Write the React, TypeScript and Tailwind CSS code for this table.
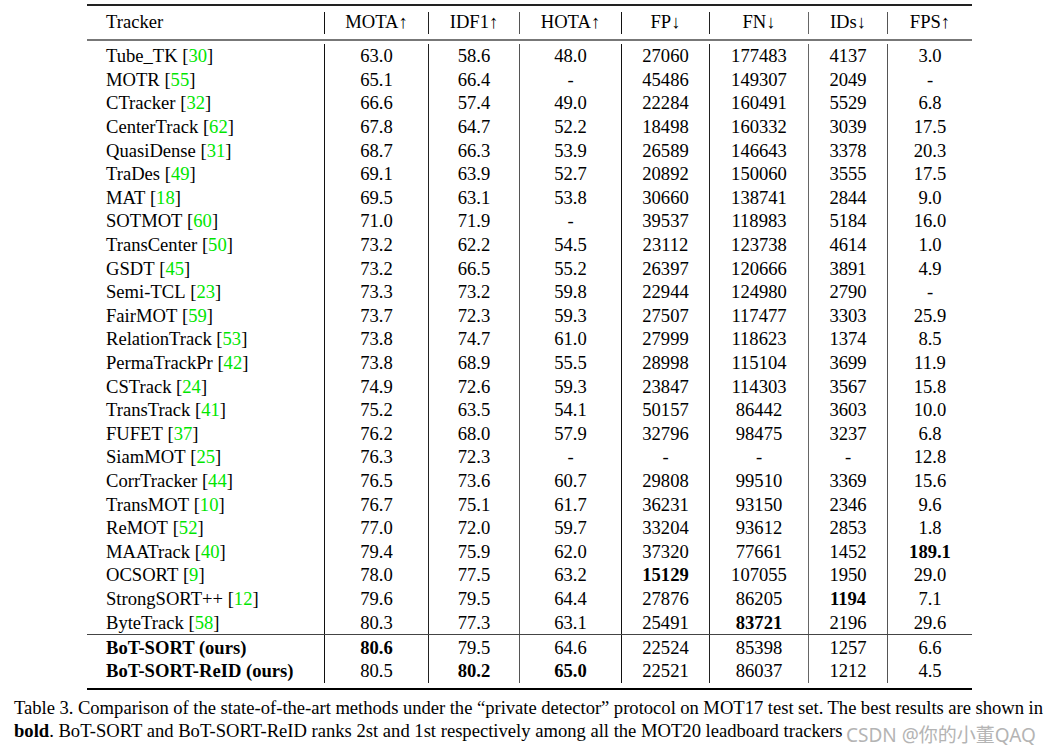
import React from "react";

type Cell = string | { b: string };
type Row = { name: string; cite?: string; bold?: boolean; cells: Cell[] };

const rows: Row[] = [
  { name: "Tube_TK", cite: "30", cells: ["63.0", "58.6", "48.0", "27060", "177483", "4137", "3.0"] },
  { name: "MOTR", cite: "55", cells: ["65.1", "66.4", "-", "45486", "149307", "2049", "-"] },
  { name: "CTracker", cite: "32", cells: ["66.6", "57.4", "49.0", "22284", "160491", "5529", "6.8"] },
  { name: "CenterTrack", cite: "62", cells: ["67.8", "64.7", "52.2", "18498", "160332", "3039", "17.5"] },
  { name: "QuasiDense", cite: "31", cells: ["68.7", "66.3", "53.9", "26589", "146643", "3378", "20.3"] },
  { name: "TraDes", cite: "49", cells: ["69.1", "63.9", "52.7", "20892", "150060", "3555", "17.5"] },
  { name: "MAT", cite: "18", cells: ["69.5", "63.1", "53.8", "30660", "138741", "2844", "9.0"] },
  { name: "SOTMOT", cite: "60", cells: ["71.0", "71.9", "-", "39537", "118983", "5184", "16.0"] },
  { name: "TransCenter", cite: "50", cells: ["73.2", "62.2", "54.5", "23112", "123738", "4614", "1.0"] },
  { name: "GSDT", cite: "45", cells: ["73.2", "66.5", "55.2", "26397", "120666", "3891", "4.9"] },
  { name: "Semi-TCL", cite: "23", cells: ["73.3", "73.2", "59.8", "22944", "124980", "2790", "-"] },
  { name: "FairMOT", cite: "59", cells: ["73.7", "72.3", "59.3", "27507", "117477", "3303", "25.9"] },
  { name: "RelationTrack", cite: "53", cells: ["73.8", "74.7", "61.0", "27999", "118623", "1374", "8.5"] },
  { name: "PermaTrackPr", cite: "42", cells: ["73.8", "68.9", "55.5", "28998", "115104", "3699", "11.9"] },
  { name: "CSTrack", cite: "24", cells: ["74.9", "72.6", "59.3", "23847", "114303", "3567", "15.8"] },
  { name: "TransTrack", cite: "41", cells: ["75.2", "63.5", "54.1", "50157", "86442", "3603", "10.0"] },
  { name: "FUFET", cite: "37", cells: ["76.2", "68.0", "57.9", "32796", "98475", "3237", "6.8"] },
  { name: "SiamMOT", cite: "25", cells: ["76.3", "72.3", "-", "-", "-", "-", "12.8"] },
  { name: "CorrTracker", cite: "44", cells: ["76.5", "73.6", "60.7", "29808", "99510", "3369", "15.6"] },
  { name: "TransMOT", cite: "10", cells: ["76.7", "75.1", "61.7", "36231", "93150", "2346", "9.6"] },
  { name: "ReMOT", cite: "52", cells: ["77.0", "72.0", "59.7", "33204", "93612", "2853", "1.8"] },
  { name: "MAATrack", cite: "40", cells: ["79.4", "75.9", "62.0", "37320", "77661", "1452", { b: "189.1" }] },
  { name: "OCSORT", cite: "9", cells: ["78.0", "77.5", "63.2", { b: "15129" }, "107055", "1950", "29.0"] },
  { name: "StrongSORT++", cite: "12", cells: ["79.6", "79.5", "64.4", "27876", "86205", { b: "1194" }, "7.1"] },
  { name: "ByteTrack", cite: "58", cells: ["80.3", "77.3", "63.1", "25491", { b: "83721" }, "2196", "29.6"] },
];

const ours: Row[] = [
  { name: "BoT-SORT (ours)", bold: true, cells: [{ b: "80.6" }, "79.5", "64.6", "22524", "85398", "1257", "6.6"] },
  { name: "BoT-SORT-ReID (ours)", bold: true, cells: ["80.5", { b: "80.2" }, { b: "65.0" }, "22521", "86037", "1212", "4.5"] },
];

const lineCls = [
  "border-r border-[#111]",
  "border-r border-[#222]",
  "border-r border-[#555]",
  "border-r border-[#111]",
  "border-r border-[#222]",
  "border-r border-[#666]",
  "border-r border-[#555]",
  "",
];

const grid = "grid grid-cols-[238px_104px_91px_102px_88px_99px_79px_84px]";

function BodyRow({ r }: { r: Row }) {
  return (
    <div className={grid}>
      <div className={`${lineCls[0]} h-[23.6px] flex items-center pl-[19px] whitespace-nowrap ${r.bold ? "font-bold" : ""}`}>
        {r.name}
        {r.cite && (
          <>
            &nbsp;[<span className="text-[#00e600]">{r.cite}</span>]
          </>
        )}
      </div>
      {r.cells.map((c, i) => (
        <div key={i} className={`${lineCls[i + 1]} h-[23.6px] flex items-center justify-center whitespace-nowrap`}>
          {typeof c === "string" ? c : <span className="font-bold">{c.b}</span>}
        </div>
      ))}
    </div>
  );
}

export default function App() {
  const headers = ["MOTA↑", "IDF1↑", "HOTA↑", "FP↓", "FN↓", "IDs↓", "FPS↑"];
  return (
    <div className="relative w-[1050px] h-[756px] bg-white text-black overflow-hidden font-['Liberation_Serif',serif] text-[18.6px] leading-[23px]">
      <div className="ml-[87px] w-[885px] pt-[4px]">
        <div className="h-[2px] bg-[#222]" />
        <div className="pt-[6px] pb-[5px]">
          <div className={grid}>
            <div className={`${lineCls[0]} h-[22px] flex items-center pl-[19px] pb-[3px]`}>Tracker</div>
            {headers.map((h, i) => (
              <div key={h} className={`${lineCls[i + 1]} h-[22px] flex items-center justify-center whitespace-nowrap pb-[3px]`}>
                {h}
              </div>
            ))}
          </div>
        </div>
        <div className="h-[2px] bg-[#777]" />
        <div className="pt-[3px]">
          {rows.map((r) => (
            <BodyRow key={r.name} r={r} />
          ))}
        </div>
        <div className="h-[1.5px] bg-[#444]" />
        <div className="pb-[5px]">
          {ours.map((r) => (
            <BodyRow key={r.name} r={r} />
          ))}
        </div>
        <div className="h-[2px] bg-black" />
      </div>
      <div className="ml-[14px] w-[1029px] mt-[6px]">
        <div className="text-justify [text-align-last:justify] [word-spacing:-1px] whitespace-nowrap">
          Table 3. Comparison of the state-of-the-art methods under the “private detector” protocol on MOT17 test set. The best results are shown in
        </div>
        <div className="whitespace-nowrap">
          <span className="font-bold">bold</span>. BoT-SORT and BoT-SORT-ReID ranks 2st and 1st respectively among all the MOT20 leadboard trackers
        </div>
      </div>
      <div className="absolute left-[846px] top-[723px] text-[19px] leading-[24px] text-[#b4b4b4] font-['Noto_Sans','Noto_Sans_CJK_SC',sans-serif] whitespace-nowrap">
        CSDN @你的小董QAQ
      </div>
    </div>
  );
}
